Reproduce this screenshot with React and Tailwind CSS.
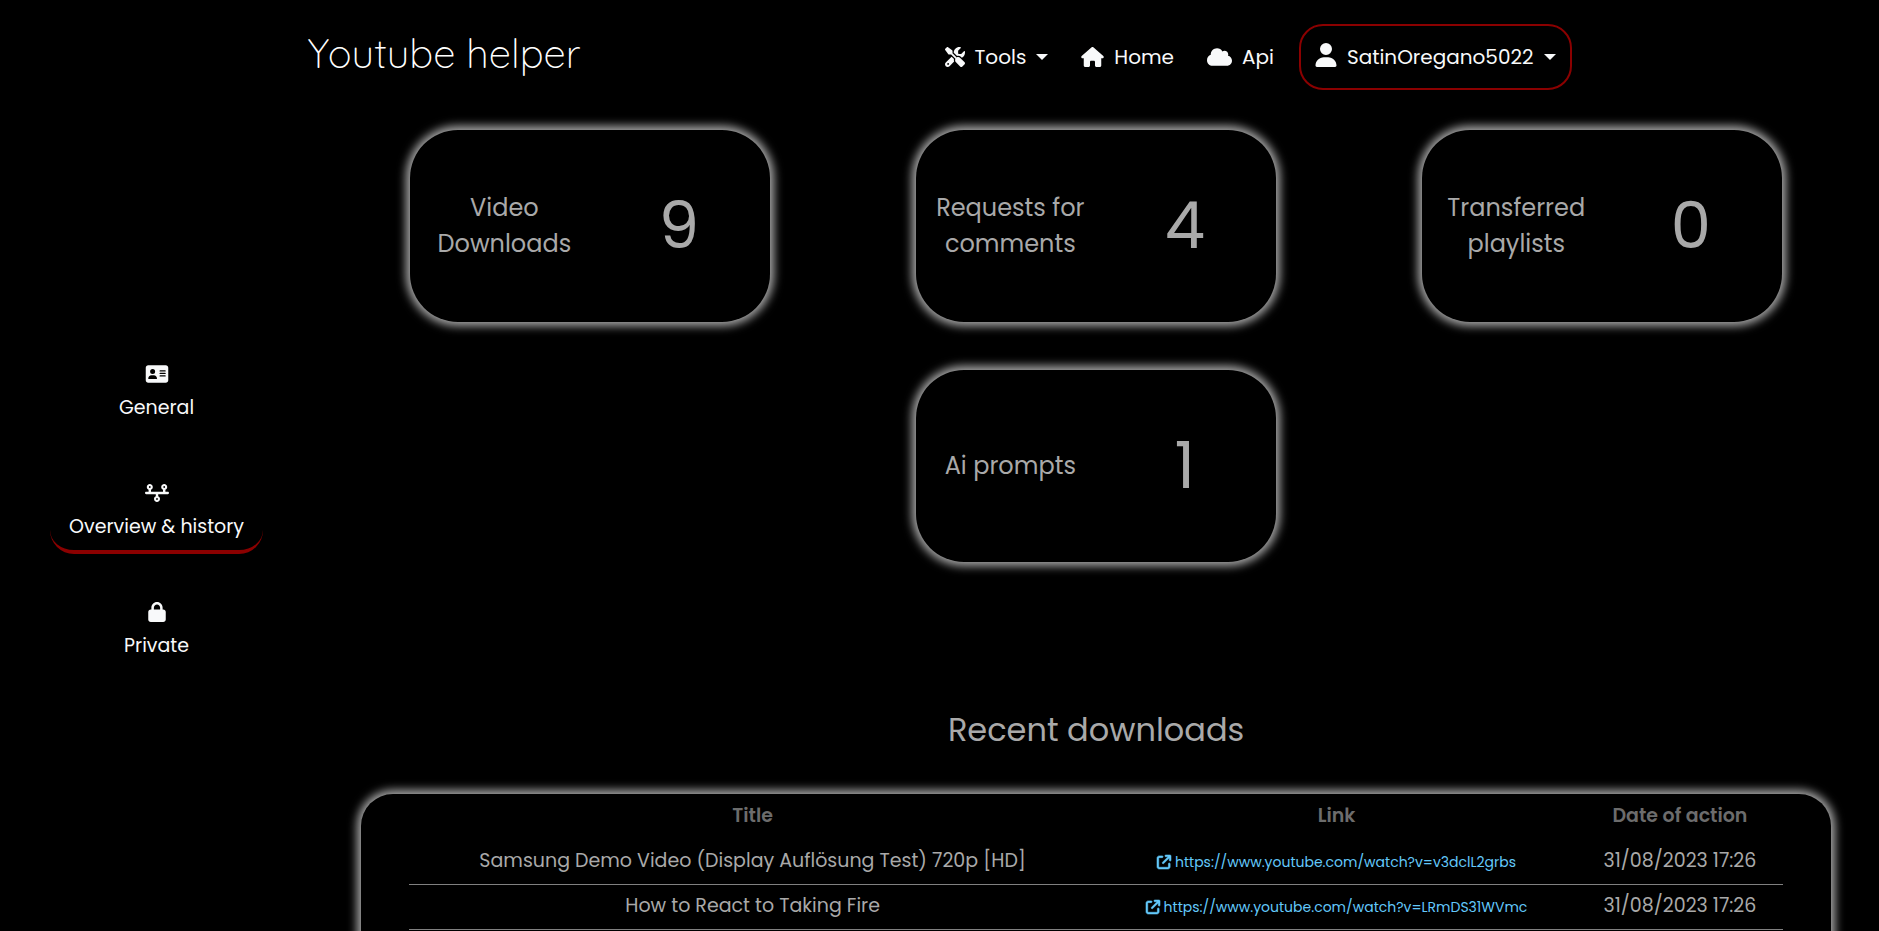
import {
  FaAddressCard,
  FaArrowUpRightFromSquare,
  FaCloud,
  FaHouse,
  FaLock,
  FaScrewdriverWrench,
  FaTimeline,
  FaUser,
} from "react-icons/fa6";

const stats = [
  { label: "Video Downloads", value: 9 },
  { label: "Requests for comments", value: 4 },
  { label: "Transferred playlists", value: 0 },
  { label: "Ai prompts", value: 1 },
];

const downloads = [
  {
    title: "Samsung Demo Video (Display Auflösung Test) 720p [HD]",
    link: "https://www.youtube.com/watch?v=v3dclL2grbs",
    date: "31/08/2023 17:26",
  },
  {
    title: "How to React to Taking Fire",
    link: "https://www.youtube.com/watch?v=LRmDS31WVmc",
    date: "31/08/2023 17:26",
  },
];

const sections = [
  { label: "General", icon: FaAddressCard },
  { label: "Overview & history", icon: FaTimeline, active: true },
  { label: "Private", icon: FaLock },
];

function Caret() {
  return <span className="h-0 w-0 border-x-6 border-t-6 border-x-transparent border-t-[#f8f9fa]" />;
}

function Header() {
  return (
    <header className="mx-auto flex w-full max-w-[1320px] items-center justify-between px-7 py-6">
      <a href="#" className="pb-2 font-['Quicksand','Lato',sans-serif] text-[40px] leading-[50px] font-light text-white">
        Youtube helper
      </a>
      <nav className="flex items-center gap-[33px] text-xl">
        <button type="button" className="flex items-center gap-2.5">
          <FaScrewdriverWrench className="size-5" />
          Tools
          <Caret />
        </button>
        <a href="#home" className="flex items-center gap-2.5">
          <FaHouse className="h-5 w-[23px]" />
          Home
        </a>
        <a href="#api" className="flex items-center gap-2.5">
          <FaCloud className="h-5 w-[25px]" />
          Api
        </a>
        <button
          type="button"
          className="-ml-2 flex h-[66px] items-center gap-2.5 rounded-3xl border-2 border-[#8b0000] px-3.5"
        >
          <FaUser className="mb-1 h-6 w-[22px]" />
          SatinOregano5022
          <Caret />
        </button>
      </nav>
    </header>
  );
}

function Sidebar() {
  return (
    <aside className="flex h-[calc(100vh-114px)] w-1/6 shrink-0 flex-col items-center justify-center gap-12 pb-2">
      {sections.map(({ label, icon: Icon, active }) => (
        <button
          key={label}
          type="button"
          className={
            "flex flex-col items-center gap-2 rounded-3xl border-b-4 px-[19px] pb-[7px] " +
            (active ? "border-[#8b0000]" : "border-transparent")
          }
        >
          <Icon className="h-5 w-6" />
          <span className="leading-8">{label}</span>
        </button>
      ))}
    </aside>
  );
}

function StatCard({ label, value }) {
  return (
    <div className="grid h-48 w-[360px] grid-cols-2 items-center rounded-[48px] pr-1 pl-[7px] text-center shadow-[0_0_10px_4px_#a9a9a9]">
      <span className="px-3 text-2xl leading-9">{label}</span>
      <span className="text-[64px] leading-none">{value}</span>
    </div>
  );
}

function Downloads() {
  return (
    <div className="mx-6 mt-10 rounded-[32px] px-12 pb-12 shadow-[0_0_10px_4px_#a9a9a9]">
      <table className="w-full table-fixed border-collapse text-center">
        <thead>
          <tr className="h-[45px] text-[#6c6c6c]">
            <th className="w-[50%] font-semibold">Title</th>
            <th className="w-[35%] font-semibold">Link</th>
            <th className="w-[15%] font-semibold">Date of action</th>
          </tr>
        </thead>
        <tbody>
          {downloads.map((row) => (
            <tr key={row.link} className="h-[45px] border-b border-[#808080]">
              <td>{row.title}</td>
              <td className="pt-1">
                <a href={row.link} className="inline-flex items-center gap-1 text-sm text-[#63c9fb]">
                  <FaArrowUpRightFromSquare className="size-3.5 overflow-visible" strokeWidth="20" />
                  {row.link}
                </a>
              </td>
              <td>{row.date}</td>
            </tr>
          ))}
        </tbody>
      </table>
    </div>
  );
}

export default function App() {
  return (
    <div className="h-screen overflow-hidden bg-black font-['Poppins','Inter',sans-serif] text-[19px] text-[#f8f9fa]">
      <Header />
      <div className="flex items-start">
        <Sidebar />
        <main className="w-5/6 px-6 pt-4 text-[#a9a9a9]">
          <div className="flex flex-wrap justify-center gap-y-12">
            {stats.map((stat) => (
              <div key={stat.label} className="flex w-1/3 justify-center">
                <StatCard {...stat} />
              </div>
            ))}
          </div>
          <h2 className="mt-36 text-center text-[32px] leading-[48px]">Recent downloads</h2>
          <Downloads />
        </main>
      </div>
    </div>
  );
}
